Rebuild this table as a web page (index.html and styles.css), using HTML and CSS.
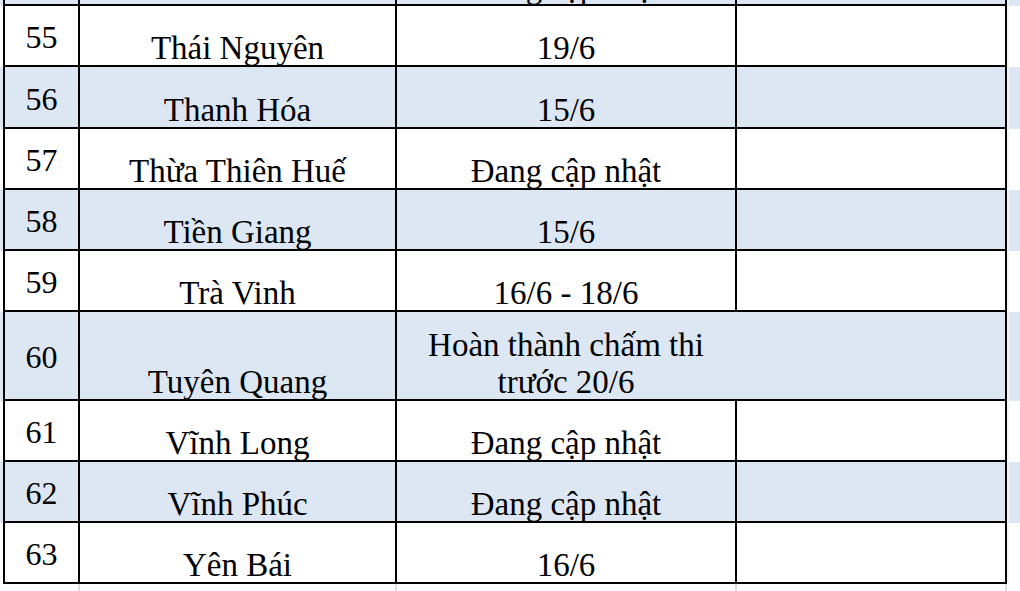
FILE: index.html
```html
<!DOCTYPE html>
<html lang="vi">
<head>
<meta charset="utf-8">
<title>Lịch chấm thi</title>
<link rel="stylesheet" href="styles.css">
</head>
<body>
<div class="sheet">
  <div class="row blue r61">
    <div class="stub"></div>
    <div class="cell num first"></div>
    <div class="cell"></div>
    <div class="cell"><span class="txt">Đang cập nhật</span></div>
    <div class="cell"></div>
    <div class="stub right"></div>
  </div>
  <div class="row r61">
    <div class="stub"></div>
    <div class="cell num first"><span>55</span></div>
    <div class="cell"><span class="txt">Thái Nguyên</span></div>
    <div class="cell"><span class="txt">19/6</span></div>
    <div class="cell"></div>
    <div class="stub right"></div>
  </div>
  <div class="row blue r62">
    <div class="stub"></div>
    <div class="cell num first"><span>56</span></div>
    <div class="cell"><span class="txt">Thanh Hóa</span></div>
    <div class="cell"><span class="txt">15/6</span></div>
    <div class="cell"></div>
    <div class="stub right"></div>
  </div>
  <div class="row r61">
    <div class="stub"></div>
    <div class="cell num first"><span>57</span></div>
    <div class="cell"><span class="txt">Thừa Thiên Huế</span></div>
    <div class="cell"><span class="txt">Đang cập nhật</span></div>
    <div class="cell"></div>
    <div class="stub right"></div>
  </div>
  <div class="row blue r61">
    <div class="stub"></div>
    <div class="cell num first"><span>58</span></div>
    <div class="cell"><span class="txt">Tiền Giang</span></div>
    <div class="cell"><span class="txt">15/6</span></div>
    <div class="cell"></div>
    <div class="stub right"></div>
  </div>
  <div class="row r61">
    <div class="stub"></div>
    <div class="cell num first"><span>59</span></div>
    <div class="cell"><span class="txt">Trà Vinh</span></div>
    <div class="cell"><span class="txt">16/6 - 18/6</span></div>
    <div class="cell"></div>
    <div class="stub right"></div>
  </div>
  <div class="row blue r89">
    <div class="stub"></div>
    <div class="cell num first"><span>60</span></div>
    <div class="cell"><span class="txt">Tuyên Quang</span></div>
    <div class="cell merged"><span class="txt wrap">Hoàn thành chấm thi trước 20/6</span></div>
    <div class="stub right"></div>
  </div>
  <div class="row r61">
    <div class="stub"></div>
    <div class="cell num first"><span>61</span></div>
    <div class="cell"><span class="txt">Vĩnh Long</span></div>
    <div class="cell"><span class="txt">Đang cập nhật</span></div>
    <div class="cell"></div>
    <div class="stub right"></div>
  </div>
  <div class="row blue r61">
    <div class="stub"></div>
    <div class="cell num first"><span>62</span></div>
    <div class="cell"><span class="txt">Vĩnh Phúc</span></div>
    <div class="cell"><span class="txt">Đang cập nhật</span></div>
    <div class="cell"></div>
    <div class="stub right"></div>
  </div>
  <div class="row r61">
    <div class="stub"></div>
    <div class="cell num first"><span>63</span></div>
    <div class="cell"><span class="txt">Yên Bái</span></div>
    <div class="cell"><span class="txt">16/6</span></div>
    <div class="cell"></div>
    <div class="stub right"></div>
  </div>
  <div class="row empty">
    <div class="stub"></div>
    <div class="gcell"></div>
    <div class="gcell"></div>
    <div class="gcell"></div>
    <div class="gcell"></div>
    <div class="stub"></div>
  </div>
</div>
</body>
</html>
```

FILE: styles.css
```css
html, body {
  margin: 0;
  padding: 0;
  background: #ffffff;
  overflow: hidden;
}

body {
  width: 1020px;
  height: 591px;
  font-family: "Liberation Serif", "Times New Roman", serif;
  font-size: 33px;
  color: #000;
}

.sheet {
  margin-top: -55px;
  display: flex;
  flex-direction: column;
}

.row {
  display: grid;
  grid-template-columns: 3px 77px 317px 340px 270px 13px;
  background: #ffffff;
}

.row.blue {
  background: #dde7f3;
}

.r61 { height: 61px; }
.r62 { height: 62px; }
.r89 { height: 89px; }
.empty { height: 7px; }

.cell {
  box-sizing: border-box;
  border-right: 2px solid #000;
  border-bottom: 2px solid #000;
  display: flex;
  justify-content: center;
  align-items: flex-end;
  min-width: 0;
}

.cell.first {
  border-left: 2px solid #000;
}

.cell.num {
  align-items: center;
  padding-top: 4px;
  line-height: 37px;
  font-size: 32px;
}

.cell.merged {
  grid-column: span 2;
  justify-content: flex-start;
}

.txt {
  display: block;
  line-height: 37px;
  margin-bottom: -2px;
  white-space: nowrap;
  text-align: center;
}

.txt.wrap {
  white-space: normal;
  width: 338px;
}

.stub.right {
  border-left: 2px solid #f3f3f3;
}

.gcell {
  box-sizing: border-box;
  border-right: 2px solid #dedede;
}

.empty .gcell:first-of-type {
  border-left: 2px solid #dedede;
}
```
